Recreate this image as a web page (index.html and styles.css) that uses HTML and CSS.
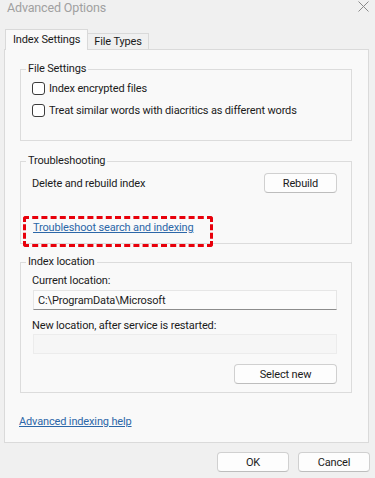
FILE: index.html
```html
<!DOCTYPE html>
<html lang="en">
<head>
  <meta charset="UTF-8">
  <title>Advanced Options</title>
  <link rel="stylesheet" href="styles.css">
</head>
<body>

  <div class="titlebar">
    <span class="title">Advanced Options</span>
    <svg class="close" width="11" height="11" viewBox="0 0 11 11">
      <path d="M0.5 0.5 L10.5 10.5 M10.5 0.5 L0.5 10.5" stroke="#8a8a8a" stroke-width="1" fill="none"/>
    </svg>
  </div>

  <div class="tabs">
    <div class="tab active">Index Settings</div>
    <div class="tab">File Types</div>
  </div>

  <div class="panel">
    <fieldset class="group group-files">
      <legend>File Settings</legend>
      <label class="check"><span class="box"></span>Index encrypted files</label>
      <label class="check"><span class="box"></span>Treat similar words with diacritics as different words</label>
    </fieldset>

    <fieldset class="group group-trouble">
      <legend>Troubleshooting</legend>
      <div class="row">
        <span>Delete and rebuild index</span>
        <button class="btn">Rebuild</button>
      </div>
      <div class="trouble-link">
        <a href="#" class="link marked">Troubleshoot search and indexing</a>
      </div>
    </fieldset>

    <fieldset class="group group-location">
      <legend>Index location</legend>
      <div class="field-label">Current location:</div>
      <div class="field current">C:\ProgramData\Microsoft</div>
      <div class="field-label second">New location, after service is restarted:</div>
      <div class="field disabled"></div>
      <div class="actions">
        <button class="btn btn-wide">Select new</button>
      </div>
    </fieldset>

    <a href="#" class="link help">Advanced indexing help</a>
  </div>

  <div class="footer">
    <button class="btn btn-dialog">OK</button>
    <button class="btn btn-dialog">Cancel</button>
  </div>

</body>
</html>
```

FILE: styles.css
```css
html, body {
  margin: 0;
  height: 100%;
}

body {
  background: #f0f0f0;
  font-family: Roboto, 'Noto Sans', sans-serif;
  font-size: 11px;
  letter-spacing: -0.15px;
  color: #1b1b1b;
  overflow: hidden;
}

.titlebar {
  height: 29px;
  display: flex;
  justify-content: space-between;
  align-items: flex-start;
  padding: 1px 6px 0 7px;
  box-sizing: border-box;
}

.title {
  font-size: 12.5px;
  line-height: 14px;
  color: #a0a0a0;
}

.tabs {
  height: 20px;
  display: flex;
  align-items: flex-end;
  padding-left: 5px;
}

.tab {
  height: 16px;
  line-height: 16px;
  padding: 0 6px;
  border: 1px solid #d9d9d9;
  border-bottom: none;
  border-left: none;
  background: #f0f0f0;
  box-sizing: border-box;
}

.tab.active {
  height: 21px;
  line-height: 19px;
  padding: 0 7px;
  margin-bottom: -1px;
  border-left: 1px solid #d9d9d9;
  background: #f9f9f9;
  position: relative;
  z-index: 1;
}

.panel {
  height: 394px;
  margin: 0 6px 0 4px;
  padding: 12px 16px 0 15px;
  background: #f9f9f9;
  border: 1px solid #dadada;
  box-sizing: border-box;
}

.group {
  margin: 0;
  padding: 0 14px 0 11px;
  border: 1px solid #dcdcdc;
}

.group legend {
  padding: 0 2px;
  margin-left: -6px;
  line-height: 14px;
}

.group-files {
  padding-bottom: 19px;
}

.check {
  display: flex;
  align-items: center;
  height: 22px;
  gap: 4px;
}

.check:first-of-type {
  margin-top: 1px;
}

.box {
  width: 11px;
  height: 11px;
  border: 1px solid #3c3c3c;
  border-radius: 3px;
  background: #fff;
}

.group-trouble {
  margin-top: 13px;
  padding-bottom: 8px;
}

.row {
  margin-top: 5px;
  display: flex;
  justify-content: space-between;
  align-items: center;
}

.btn {
  height: 20px;
  width: 73px;
  padding: 0;
  font: inherit;
  letter-spacing: inherit;
  color: #1b1b1b;
  background: #fdfdfd;
  border: 1px solid #d0d0d0;
  border-bottom-color: #bdbdbd;
  border-radius: 4px;
}

.trouble-link {
  margin-top: 27px;
  line-height: 15px;
}

.link {
  color: #2c67a8;
  text-decoration: underline;
}

.marked {
  position: relative;
  margin-left: 1px;
}

.marked::after {
  content: "";
  position: absolute;
  left: -10px;
  top: -5px;
  width: 184px;
  height: 25px;
  border: 3px dashed #e8000b;
  border-radius: 3px;
}

.group-location {
  margin-top: 11px;
  padding-bottom: 8px;
}

.field-label {
  margin-top: 4px;
  line-height: 15px;
}

.field-label.second {
  margin-top: 8px;
}

.field {
  margin: 2px 0 0 1px;
  height: 20px;
  line-height: 19px;
  padding-left: 4px;
  box-sizing: border-box;
  border: 1px solid #e6e6e6;
  background: #fbfbfb;
}

.field.current {
  border-bottom-color: #8c8c8c;
}

.field.disabled {
  margin-top: 1px;
  background: #f6f6f6;
  border-color: #ececec;
}

.actions {
  margin-top: 10px;
  display: flex;
  justify-content: flex-end;
}

.btn-wide {
  width: 103px;
}

.help {
  display: inline-block;
  margin: 21px 0 0 -1px;
  line-height: 15px;
}

.footer {
  margin-top: 9px;
  display: flex;
  justify-content: flex-end;
  gap: 9px;
  padding-right: 5px;
}

.btn-dialog {
  width: 72px;
}
```
